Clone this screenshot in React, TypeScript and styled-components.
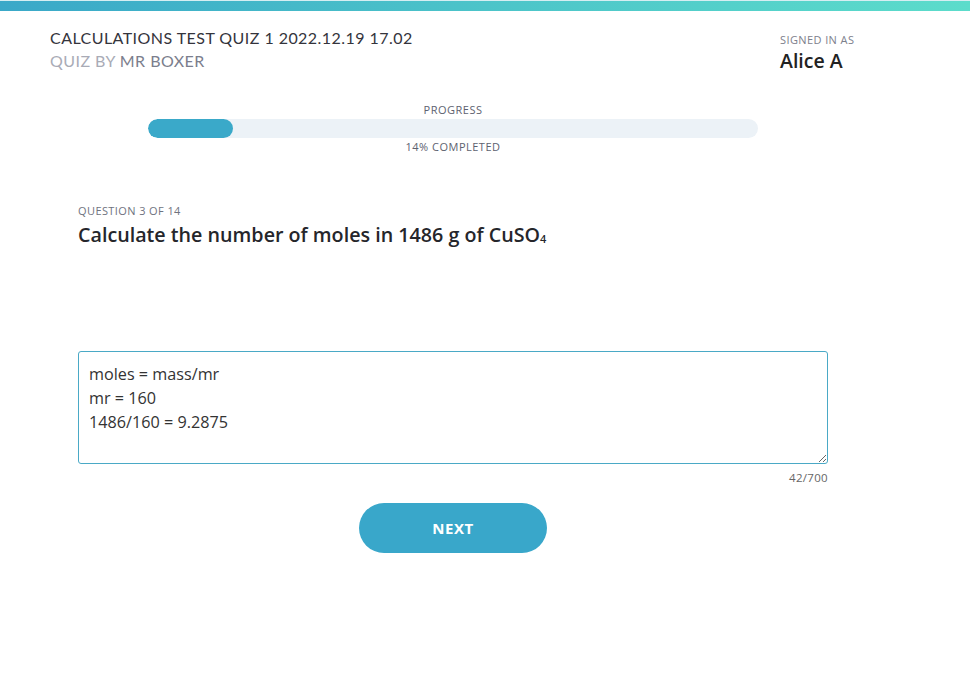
import React from "react";
import styled, { createGlobalStyle } from "styled-components";

const Global = createGlobalStyle`
  html, body { margin: 0; padding: 0; background: #fff; }
  body { font-family: "Open Sans", "Noto Sans", sans-serif; }
`;

const TopBar = styled.div`
  height: 10px;
  background: linear-gradient(90deg, #3aa8c8 0%, #4cc4c9 50%, #5cdccb 100%);
  border-top: 1px solid #d6eef2;
`;

const Page = styled.div`
  width: 906px;
`;

const Header = styled.header`
  display: flex;
  justify-content: space-between;
  padding: 16px 50px 0 50px;
`;

const TitleBlock = styled.div`
  display: flex;
  flex-direction: column;
  gap: 1px;
`;

const QuizTitle = styled.div`
  font-family: "Lato", sans-serif;
  font-size: 16px;
  color: #34343c;
  letter-spacing: 0.45px;
  line-height: 22px;
`;

const QuizBy = styled.div`
  font-family: "Lato", sans-serif;
  font-size: 16px;
  color: #a9abb6;
  letter-spacing: 0.45px;
  line-height: 22px;
  span { color: #7b7e8d; }
`;

const UserBlock = styled.div`
  display: flex;
  flex-direction: column;
  width: 76px;
  padding-top: 6px;
`;

const SignedLabel = styled.div`
  font-size: 11px;
  color: #7d808c;
  letter-spacing: 0.4px;
  line-height: 14px;
`;

const UserName = styled.div`
  font-size: 19.5px;
  font-weight: 600;
  color: #222;
  line-height: 24px;
  margin-top: 2px;
  white-space: nowrap;
`;

const ProgressSection = styled.section`
  display: flex;
  flex-direction: column;
  align-items: center;
  margin-top: 30px;
`;

const SmallCaps = styled.div<{ $gap?: number }>`
  font-size: 11px;
  color: #5d6270;
  letter-spacing: 0.5px;
  line-height: 14px;
  margin: ${(p) => (p.$gap ? `${p.$gap}px` : "0")} 0 0 0;
`;

const Track = styled.div`
  width: 610px;
  height: 19px;
  border-radius: 10px;
  background: #ecf2f7;
  overflow: hidden;
  margin-top: 2px;
`;

const Fill = styled.div`
  height: 100%;
  border-radius: 10px;
  background: #3aa9c9;
`;

const Main = styled.main`
  width: 750px;
  margin: 50px 0 0 78px;
  display: flex;
  flex-direction: column;
`;

const QuestionLabel = styled.div`
  font-size: 11px;
  color: #6f7380;
  letter-spacing: 0.4px;
  line-height: 14px;
`;

const QuestionText = styled.h1`
  margin: 4px 0 0 0;
  font-size: 19.7px;
  font-weight: 600;
  color: #25262b;
  line-height: 26px;
  sub {
    font-size: 11px;
    vertical-align: baseline;
    position: relative;
    top: 1px;
  }
`;

const Answer = styled.textarea`
  margin-top: 100px;
  box-sizing: border-box;
  width: 750px;
  height: 113px;
  border: 1px solid #4aa9c6;
  border-radius: 3px;
  padding: 10px 10px;
  font-family: "Open Sans", sans-serif;
  font-size: 16.2px;
  line-height: 24px;
  color: #333;
  outline: none;
  resize: vertical;
`;

const Counter = styled.div`
  align-self: flex-end;
  font-size: 11.5px;
  color: #666;
  letter-spacing: 0.3px;
  margin-top: 7px;
  line-height: 14px;
`;

const NextButton = styled.button`
  align-self: center;
  margin-top: 18px;
  width: 188px;
  height: 50px;
  border: none;
  border-radius: 25px;
  background: #39a7ca;
  color: #fff;
  font-family: "Open Sans", sans-serif;
  font-size: 15px;
  font-weight: 700;
  letter-spacing: 0.6px;
  cursor: pointer;
`;

export default function App() {
  const progress = 14;
  return (
    <>
      <Global />
      <TopBar />
      <Page>
        <Header>
          <TitleBlock>
            <QuizTitle>CALCULATIONS TEST QUIZ 1 2022.12.19 17.02</QuizTitle>
            <QuizBy>
              QUIZ BY <span>MR BOXER</span>
            </QuizBy>
          </TitleBlock>
          <UserBlock>
            <SignedLabel>SIGNED IN AS</SignedLabel>
            <UserName>Alice A</UserName>
          </UserBlock>
        </Header>
        <ProgressSection>
          <SmallCaps>PROGRESS</SmallCaps>
          <Track>
            <Fill style={{ width: `${progress}%` }} />
          </Track>
          <SmallCaps $gap={2}>{progress}% COMPLETED</SmallCaps>
        </ProgressSection>
        <Main>
          <QuestionLabel>QUESTION 3 OF 14</QuestionLabel>
          <QuestionText>
            Calculate the number of moles in 1486 g of CuSO<sub>4</sub>
          </QuestionText>
          <Answer
            defaultValue={"moles = mass/mr\nmr = 160\n1486/160 = 9.2875"}
          />
          <Counter>42/700</Counter>
          <NextButton>NEXT</NextButton>
        </Main>
      </Page>
    </>
  );
}
